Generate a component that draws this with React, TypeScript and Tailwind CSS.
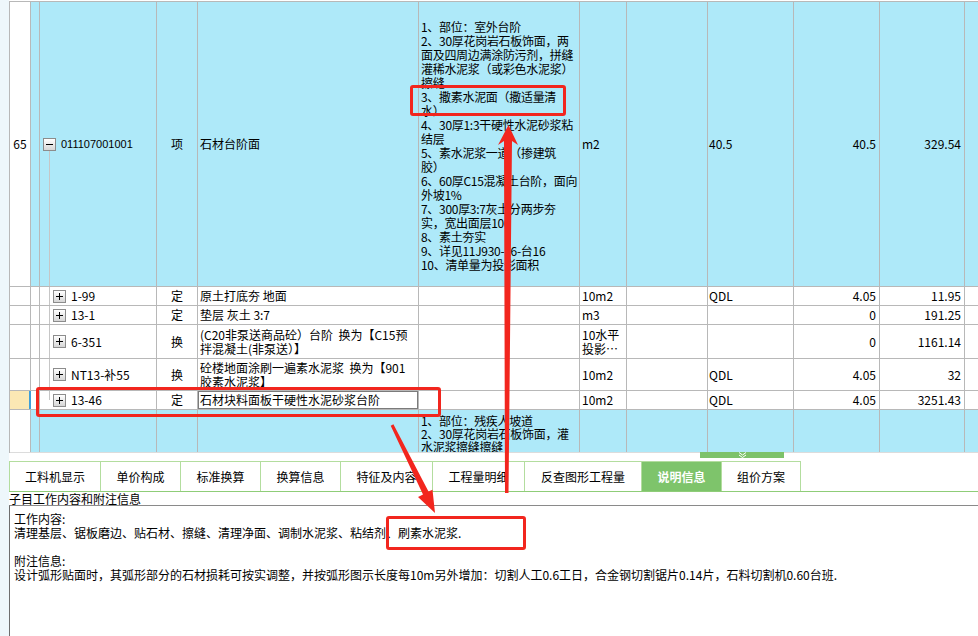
import React from 'react';

// 清单/定额 grid with the 说明信息 tab open, plus the red screenshot annotations

const LINE = 'border-[#b8b8b8]';
const BLUE = 'bg-[#aee9f9]';

const descLines = [
  '1、部位：室外台阶',
  '2、30厚花岗岩石板饰面，两',
  '面及四周边满涂防污剂，拼缝',
  '灌稀水泥浆（或彩色水泥浆）',
  '擦缝',
  '3、撒素水泥面（撒适量清',
  '水）',
  '4、30厚1:3干硬性水泥砂浆粘',
  '结层',
  '5、素水泥浆一道（掺建筑',
  '胶）',
  '6、60厚C15混凝土台阶，面向',
  '外坡1%',
  '7、300厚3:7灰土分两步夯',
  '实，宽出面层100',
  '8、素土夯实',
  '9、详见11J930-16-台16',
  '10、清单量为投影面积',
];

interface SubRow {
  code: string;
  type: string;
  name: string[];
  unit: string[];
  expr: string;
  qty: string;
  price: string;
  h: string;
  last?: boolean;
}

const subRows: SubRow[] = [
  { code: '1-99', type: '定', name: ['原土打底夯 地面'], unit: ['10m2'], expr: 'QDL', qty: '4.05', price: '11.95', h: 'h-[19px]' },
  { code: '13-1', type: '定', name: ['垫层 灰土 3:7'], unit: ['m3'], expr: '', qty: '0', price: '191.25', h: 'h-[19px]' },
  {
    code: '6-351',
    type: '换',
    name: ['(C20非泵送商品砼）台阶  换为【C15预', '拌混凝土(非泵送）】'],
    unit: ['10水平', '投影…'],
    expr: '',
    qty: '0',
    price: '1161.14',
    h: 'h-[34px]',
  },
  {
    code: 'NT13-补55',
    type: '换',
    name: ['砼楼地面涂刷一遍素水泥浆  换为【901', '胶素水泥浆】'],
    unit: ['10m2'],
    expr: 'QDL',
    qty: '4.05',
    price: '32',
    h: 'h-[32px]',
  },
  { code: '13-46', type: '定', name: ['石材块料面板干硬性水泥砂浆台阶'], unit: ['10m2'], expr: 'QDL', qty: '4.05', price: '3251.43', h: 'h-[19px]', last: true },
];

const tabs = [
  { label: '工料机显示', w: 'w-[92px] border-l' },
  { label: '单价构成', w: 'w-[80px]' },
  { label: '标准换算', w: 'w-[80px]' },
  { label: '换算信息', w: 'w-[80px]' },
  { label: '特征及内容', w: 'w-[92px]' },
  { label: '工程量明细', w: 'w-[92px]' },
  { label: '反查图形工程量', w: 'w-[117px]' },
  { label: '说明信息', w: 'w-[80px]', active: true },
  { label: '组价方案', w: 'w-[79px]' },
];

function TreeBox({ minus }: { minus?: boolean }) {
  return (
    <span className="inline-flex w-[13px] h-[13px] shrink-0 items-center justify-center border border-[#8c8c8c] bg-linear-to-b from-white to-[#d6d6d6]">
      <svg width="9" height="9" viewBox="0 0 9 9">
        <path d="M1 4.5h7" stroke="#000" strokeWidth="1" />
        {!minus && <path d="M4.5 1v7" stroke="#000" strokeWidth="1" />}
      </svg>
    </span>
  );
}

function Lines({ lines }: { lines: string[] }) {
  return (
    <div className="leading-[14px] whitespace-pre">
      {lines.map((l) => (
        <div key={l}>{l}</div>
      ))}
    </div>
  );
}

function ChildRow({ row }: { row: SubRow }) {
  const cell = `shrink-0 h-full border-r ${LINE} flex items-center overflow-hidden bg-white`;
  return (
    <div className={`flex ${row.h} border-b ${LINE}`}>
      <div
        className={`w-[21px] shrink-0 h-full border-r ${
          row.last ? 'border-r-2 border-r-[#3f9fd8] bg-[#fbe8b4]' : `${LINE} bg-white`
        }`}
      />
      <div className={`${cell} w-[9px]`} />
      <div className={`${cell} relative w-[117px] pl-[13px]`}>
        <span className={`absolute left-[9px] top-0 w-px bg-[#c6c6c6] ${row.last ? 'h-1/2' : 'bottom-0'}`} />
        <TreeBox />
        <span className="ml-[5px]">{row.code}</span>
      </div>
      <div className={`${cell} w-[41px] justify-center`}>{row.type}</div>
      <div className={`${cell} relative w-[221px] pl-[2px]`}>
        <Lines lines={row.name} />
        {row.last && <span className="absolute -left-px -top-px -right-px -bottom-px border-2 border-[#7b7b7b]" />}
      </div>
      <div className={`${cell} w-[161px]`} />
      <div className={`${cell} w-[47px] pl-[2px]`}>
        <Lines lines={row.unit} />
      </div>
      <div className={`${cell} w-[81px]`} />
      <div className={`${cell} w-[86px] pl-[1px]`}>{row.expr}</div>
      <div className={`${cell} w-[86px] justify-end pr-[3px]`}>{row.qty}</div>
      <div className={`${cell} w-[85px] justify-end pr-[3px]`}>{row.price}</div>
      <div className="flex-1 h-full bg-white" />
    </div>
  );
}

export default function App() {
  const blueCell = `shrink-0 h-full border-r ${LINE} flex items-center overflow-hidden ${BLUE}`;

  return (
    <div className="relative w-[978px] h-[636px] overflow-hidden bg-white text-[12px] text-black font-['Noto_Sans_CJK_SC',sans-serif] flex">
      {/* left gutter */}
      <div className="w-[9px] shrink-0 bg-[#eef7fb]" />

      <div className="flex-1 flex flex-col min-w-0">
        {/* grid */}
        <div className={`mt-px border-t border-l ${LINE} flex flex-col`}>
          {/* 65 清单 row */}
          <div className={`flex h-[285px] border-b ${LINE}`}>
            <div className={`w-[21px] shrink-0 h-full border-r ${LINE} bg-white flex items-center justify-center`}>65</div>
            <div className={`${blueCell} w-[9px]`} />
            <div className={`${blueCell} relative w-[117px] pl-[3px]`}>
              <TreeBox minus />
              <span className="ml-[5px] font-['Liberation_Sans',sans-serif] text-[11px]">011107001001</span>
              <span className="absolute left-[9px] top-[149px] bottom-0 w-px bg-[#c6c6c6]" />
            </div>
            <div className={`${blueCell} w-[41px] justify-center`}>项</div>
            <div className={`${blueCell} w-[221px] pl-[2px]`}>石材台阶面</div>
            <div className={`${blueCell} w-[161px] pl-[2px] pt-[3px] tracking-[-0.3px]`}>
              <Lines lines={descLines} />
            </div>
            <div className={`${blueCell} w-[47px] pl-[2px]`}>m2</div>
            <div className={`${blueCell} w-[81px]`} />
            <div className={`${blueCell} w-[86px] pl-[1px]`}>40.5</div>
            <div className={`${blueCell} w-[86px] justify-end pr-[3px]`}>40.5</div>
            <div className={`${blueCell} w-[85px] justify-end pr-[3px]`}>329.54</div>
            <div className={`flex-1 h-full ${BLUE}`} />
          </div>

          {subRows.map((r) => (
            <ChildRow key={r.code} row={r} />
          ))}

          {/* next 清单 row, cut off */}
          <div className="flex h-[43px] border-b border-[#dcdcdc]">
            <div className={`w-[21px] shrink-0 h-full border-r ${LINE} bg-white`} />
            <div className={`${blueCell} w-[9px]`} />
            <div className={`${blueCell} w-[117px]`} />
            <div className={`${blueCell} w-[41px]`} />
            <div className={`${blueCell} w-[221px]`} />
            <div className={`shrink-0 h-full border-r ${LINE} overflow-hidden ${BLUE} w-[161px] pl-[2px] pt-[4px] leading-[13px] whitespace-nowrap tracking-[-0.3px]`}>
              <div>1、部位：残疾人坡道</div>
              <div>2、30厚花岗岩石板饰面，灌</div>
              <div>水泥浆擦缝擦缝</div>
            </div>
            <div className={`${blueCell} w-[47px]`} />
            <div className={`${blueCell} w-[81px]`} />
            <div className={`${blueCell} w-[86px]`} />
            <div className={`${blueCell} w-[86px]`} />
            <div className={`${blueCell} w-[85px]`} />
            <div className={`flex-1 h-full ${BLUE}`} />
          </div>
        </div>

        {/* splitter */}
        <div className="relative h-[8px] shrink-0">
          <div className="absolute -top-px left-[691px] w-[84px] h-[6px] bg-[#7dc26a] flex justify-center">
            <svg width="9" height="6" viewBox="0 0 9 6">
              <path d="M1 0.5l3.5 2.5 3.5-2.5M1 3l3.5 2.5 3.5-2.5" fill="none" stroke="#fff" strokeWidth="1" />
            </svg>
          </div>
        </div>

        {/* tabs */}
        <div className="flex h-[31px] shrink-0 border-b border-[#8fcd78]">
          {tabs.map((t) => (
            <div
              key={t.label}
              className={`${t.w} h-[30px] shrink-0 flex items-center justify-center border-t border-r border-[#b3dd9e] ${
                t.active ? 'bg-[#7ec46b] text-white font-bold' : 'bg-white'
              }`}
            >
              {t.label}
            </div>
          ))}
        </div>

        <div className="h-[13px] shrink-0 leading-[13px] whitespace-nowrap">子目工作内容和附注信息</div>

        {/* notes box */}
        <div className="flex-1 border-t border-l border-t-[#8a8a8a] border-l-[#6e6e6e] pl-[4px] pt-[6px] leading-[14px] whitespace-nowrap">
          <div>工作内容:</div>
          <div>清理基层、锯板磨边、贴石材、擦缝、清理净面、调制水泥浆、粘结剂、刷素水泥浆.</div>
          <div className="h-[14px]" />
          <div>附注信息:</div>
          <div>
            设计弧形贴面时，其弧形部分的石材损耗可按实调整，并按弧形图示长度每10m另外增加：切割人工0.6工日，合金钢切割锯片0.14片，石料切割机0.60台班.
          </div>
        </div>
      </div>

      {/* red annotations */}
      <div className="absolute left-[410px] top-[85px] w-[156px] h-[31px] border-[3px] border-[#f2261e] rounded-[3px] pointer-events-none" />
      <div className="absolute left-[36px] top-[387px] w-[405px] h-[30px] border-[3px] border-[#f2261e] rounded-[3px] pointer-events-none" />
      <div className="absolute left-[386px] top-[516px] w-[140px] h-[34px] border-[3px] border-[#f2261e] rounded-[3px] pointer-events-none" />
      <svg className="absolute left-0 top-0 pointer-events-none" width="978" height="636" viewBox="0 0 978 636">
        <polygon
          points="505,493 508.5,493 512,141 518,145 508.5,125 498,145 504,141"
          fill="#f2261e"
        />
        <polygon
          points="390.7,425.7 393.4,424.3 428.5,491.5 432.5,489.7 435,513 418,497 423,494.5"
          fill="#f2261e"
        />
      </svg>
    </div>
  );
}
